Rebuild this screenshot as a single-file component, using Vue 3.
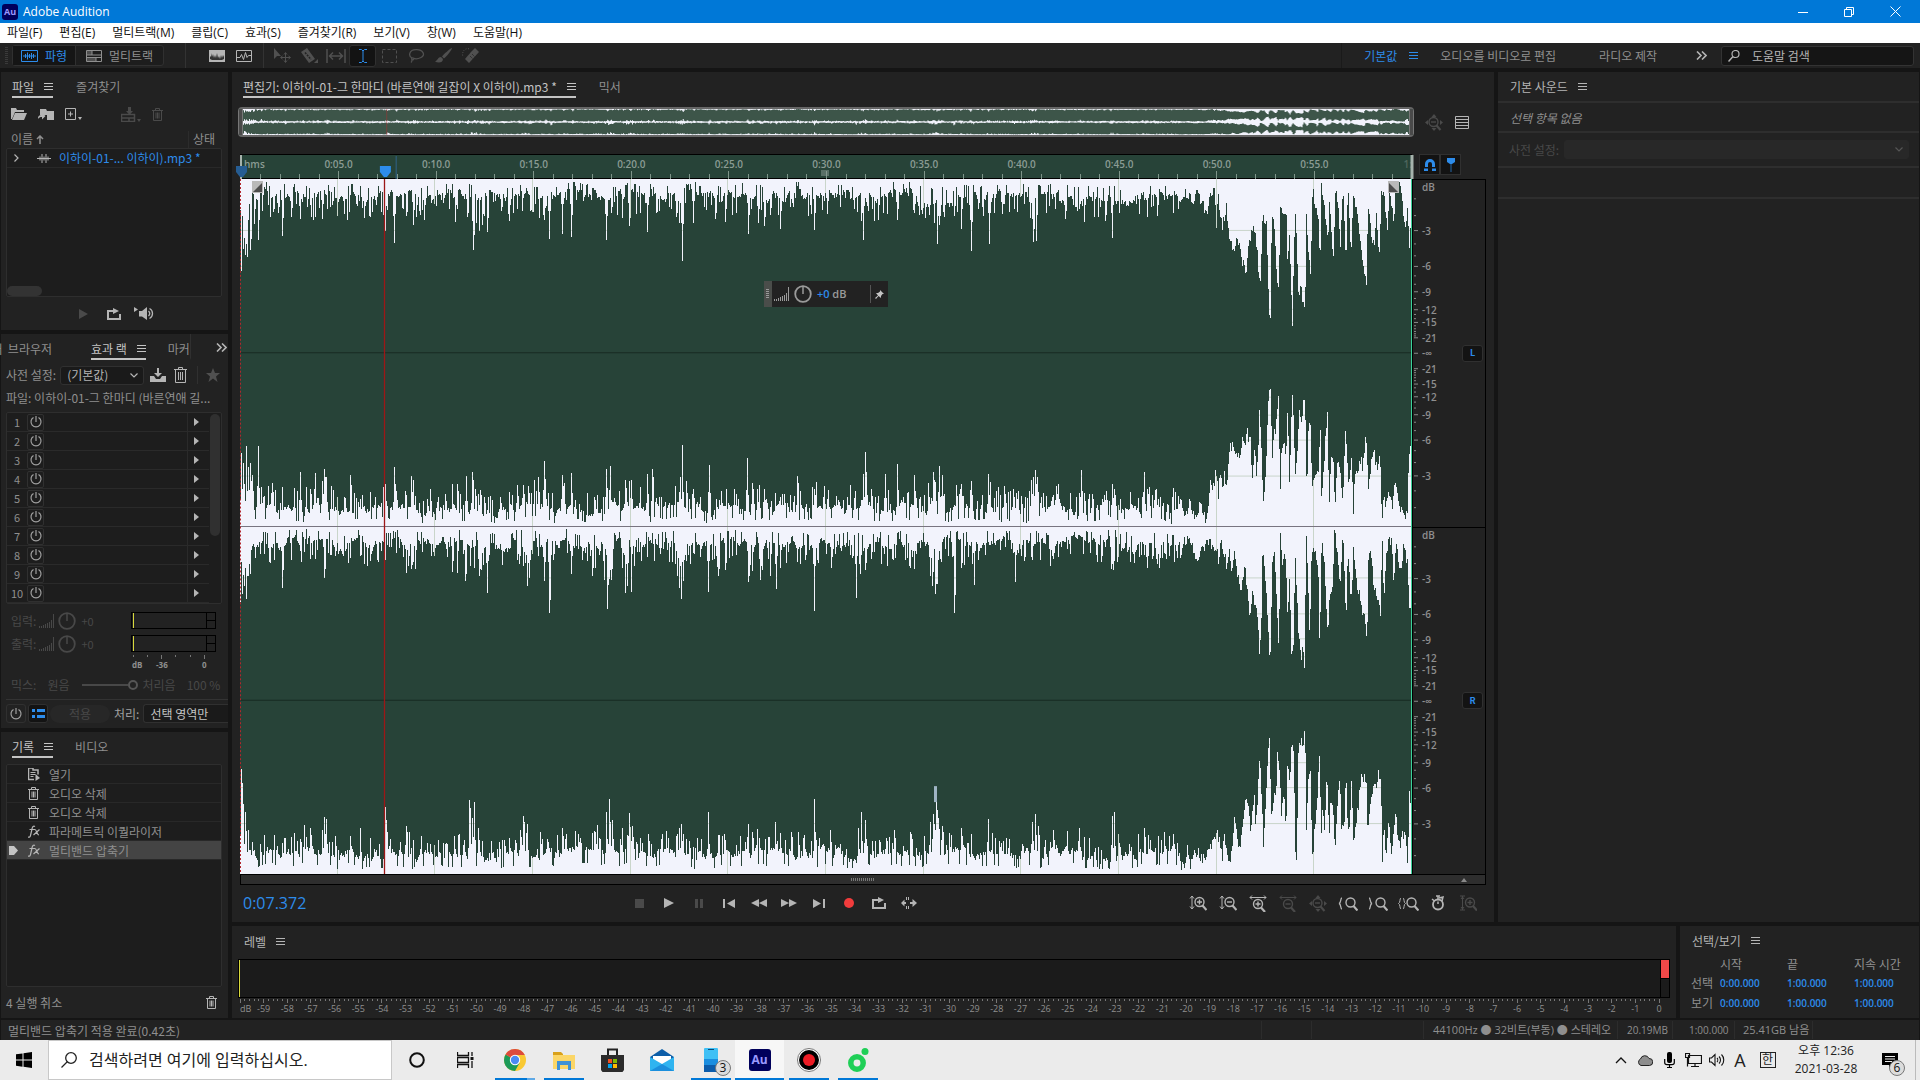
<template>
  <div class="app">
    <header class="titlebar">
      <span class="au-logo">Au</span>
      <span class="title-text">Adobe Audition</span>
      <div class="window-controls">
        <button type="button" aria-label="최소화"><Icon name="minimize" /></button>
        <button type="button" aria-label="이전 크기로"><Icon name="restore" /></button>
        <button type="button" aria-label="닫기"><Icon name="close" /></button>
      </div>
    </header>

    <nav class="menubar">
      <button v-for="item in menus" :key="item" type="button">{{ item }}</button>
    </nav>

    <div class="toolbar">
      <span class="grip"></span>
      <div class="mode-switch">
        <button type="button" class="mode active"><Icon name="waveform" />파형</button>
        <button type="button" class="mode"><Icon name="multitrack" />멀티트랙</button>
      </div>
      <div class="tool-group first">
        <button type="button" aria-label="스펙트럼"><Icon name="spectrum" /></button>
        <button type="button" aria-label="피치"><Icon name="pitch" /></button>
      </div>
      <div class="tool-group second">
        <button
          v-for="tool in tools"
          :key="tool"
          type="button"
          :aria-label="tool"
          :class="{ active: tool === 'ibeam' }"
        >
          <Icon :name="tool" />
        </button>
      </div>
      <div class="workspaces">
        <a href="#" class="ws active">기본값</a>
        <Icon name="menu" class="ws-menu" />
        <a href="#" class="ws wide">오디오를 비디오로 편집</a>
        <a href="#" class="ws radio">라디오 제작</a>
        <button type="button" class="more" aria-label="더 보기"><Icon name="more" /></button>
      </div>
      <label class="help-search">
        <Icon name="search" />
        <input type="text" placeholder="도움말 검색" aria-label="도움말 검색" />
      </label>
    </div>

    <main class="workspace">
      <aside class="left">
        <section class="panel files">
          <div class="tabs">
            <button type="button" class="tab active">파일<Icon name="menu" /></button>
            <button type="button" class="tab favorites">즐겨찾기</button>
          </div>
          <div class="file-tools">
            <button type="button" aria-label="열기"><Icon name="folder" /></button>
            <button type="button" aria-label="가져오기"><Icon name="importFile" /></button>
            <button type="button" aria-label="새로 만들기"><Icon name="newFile" /></button>
            <button type="button" class="insert" aria-label="삽입"><Icon name="insert" /></button>
            <button type="button" class="off" aria-label="삭제"><Icon name="trash" /></button>
          </div>
          <div class="file-head">
            <span>이름 <Icon name="arrowUp" /></span>
            <span class="state">상태</span>
          </div>
          <div class="box file-list">
            <div class="file-row">
              <Icon name="chevronRight" />
              <Icon name="wave" class="wave-icon" />
              <span>이하이-01-... 이하이).mp3 *</span>
            </div>
            <span class="h-thumb"></span>
          </div>
          <div class="preview">
            <button type="button" class="off" aria-label="재생"><Icon name="playSmall" /></button>
            <button type="button" aria-label="반복"><Icon name="loop" /></button>
            <button type="button" aria-label="자동 재생"><Icon name="speaker" /></button>
          </div>
        </section>

        <section class="panel effects">
          <div class="tabs">
            <button type="button" class="tab browser">ㅓ 브라우저</button>
            <button type="button" class="tab active">효과 랙<Icon name="menu" /></button>
            <button type="button" class="tab marker">마커</button>
            <button type="button" class="more" aria-label="더 보기"><Icon name="more" /></button>
          </div>
          <div class="preset">
            <label for="preset">사전 설정:</label>
            <span class="select-wrap">
              <select id="preset"><option>(기본값)</option></select>
              <Icon name="chevronDown" />
            </span>
            <button type="button" aria-label="저장"><Icon name="save" /></button>
            <button type="button" aria-label="삭제"><Icon name="trashBig" /></button>
            <button type="button" class="star" aria-label="즐겨찾기"><Icon name="star" /></button>
          </div>
          <p class="rack-file">파일: 이하이-01-그 한마디 (바른연애 길...</p>
          <div class="box rack">
            <ol>
              <li v-for="n in 10" :key="n">
                <span class="slot-no">{{ n }}</span>
                <button type="button" class="power" aria-label="전원"><Icon name="power" /></button>
                <button type="button" class="slot-more" aria-label="효과 선택"><Icon name="triangle" /></button>
              </li>
            </ol>
            <span class="v-thumb"></span>
          </div>
          <div class="io">
            <div v-for="label in ['입력:', '출력:']" :key="label" class="io-row">
              <span>{{ label }}</span>
              <Icon name="bars" />
              <Icon name="knob" />
              <span class="gain">+0</span>
              <span class="mini-meter"><i></i></span>
            </div>
            <svg class="mini-scale" width="85" height="18">
              <path d="M2.500 0v2M16.500 0v2M30.500 0v4M44.500 0v2M59.500 0v2M73.500 0v4" stroke="#777" />
              <text x="1" y="13">dB</text>
              <text x="25" y="13">-36</text>
              <text x="71" y="13">0</text>
            </svg>
            <label class="mix">
              <span>믹스:</span>
              <span class="dry">원음</span>
              <input type="range" min="0" max="100" value="100" disabled />
              <span class="wet">처리음</span>
              <span>100 %</span>
            </label>
          </div>
          <div class="rack-foot">
            <button type="button" class="square" aria-label="전원"><Icon name="power" /></button>
            <button type="button" class="square list-on" aria-label="목록"><Icon name="list" /></button>
            <button type="button" class="apply" disabled>적용</button>
            <label for="process">처리:</label>
            <select id="process"><option>선택 영역만</option></select>
          </div>
        </section>

        <section class="panel history">
          <div class="tabs">
            <button type="button" class="tab active">기록<Icon name="menu" /></button>
            <button type="button" class="tab video">비디오</button>
          </div>
          <ul class="box steps">
            <li v-for="(step, i) in steps" :key="i" :class="{ current: i === steps.length - 1 }">
              <span class="pointer"><Icon v-if="i === steps.length - 1" name="pointer" /></span>
              <span class="step-icon"><Icon :name="step.icon" /></span>
              <span class="step-text">{{ step.text }}</span>
            </li>
          </ul>
          <div class="history-foot">
            <span>4 실행 취소</span>
            <button type="button" aria-label="삭제"><Icon name="trash" /></button>
          </div>
        </section>
      </aside>

      <div class="main">
        <div class="main-top">
          <section class="panel editor">
            <div class="tabs">
              <button type="button" class="tab active">
                편집기: 이하이-01-그 한마디 (바른연애 길잡이 X 이하이).mp3 *<Icon name="menu" />
              </button>
              <button type="button" class="tab mixer">믹서</button>
            </div>

            <div class="overview-row">
              <div class="overview">
                <span class="handle"></span>
                <svg viewBox="0 0 1172 696" preserveAspectRatio="none">
                  <path :d="wavePath" fill="#f2f3fc" />
                  <path d="M0 348H1172M0 692H1172" stroke="#f2f3fc" stroke-width="16" />
                  <path d="M144.500 0V696" stroke="#b03030" />
                </svg>
                <span class="handle"></span>
              </div>
              <div class="overview-tools">
                <button type="button" class="off" aria-label="전체 축소"><Icon name="zoomFull" /></button>
                <button type="button" aria-label="목록 보기"><Icon name="rows" /></button>
              </div>
            </div>

            <div class="ruler-row">
              <svg class="ruler">
                <text x="3" y="13">hms</text>
                <g v-for="s in 59" :key="s">
                  <line
                    :x1="pct(s / 60)"
                    :x2="pct(s / 60)"
                    :y1="s % 5 ? 19 : 16"
                    y2="24"
                    stroke="#7f958a"
                    shape-rendering="crispEdges"
                  />
                  <text v-if="s % 5 === 0" :x="pct(s / 60)" y="13" text-anchor="middle">
                    {{ timeLabel(s) }}
                  </text>
                </g>
                <text x="100%" y="13" text-anchor="end" opacity="0.4">1:</text>
                <line x1="13.25%" x2="13.25%" y1="1" y2="24" stroke="#2f6289" />
                <svg x="50%" y="15" width="1" height="7" overflow="visible">
                  <path d="M-4.500 0v6M-2.500 0v6M-.5 0v6M1.500 0v6" stroke="#8b9c94" />
                </svg>
                <line x1="0" x2="0" y1="0" y2="24" stroke="#a6b3ac" stroke-width="2" />
                <svg x="0" y="11" width="1" height="1" overflow="visible">
                  <path d="M-5 0H6V6L2 11H-1L-5 6Z" fill="#265d93" />
                </svg>
                <svg :x="pct(playhead)" y="11" width="1" height="1" overflow="visible">
                  <path d="M-5 0H6V6L2 11H-1L-5 6Z" fill="#2d8ceb" />
                </svg>
                <line x1="100%" x2="100%" y1="0" y2="24" stroke="#a6b3ac" stroke-width="3" />
              </svg>
              <div class="snap">
                <button type="button" aria-label="스냅"><Icon name="magnet" /></button>
                <button type="button" aria-label="마커"><Icon name="markerPin" /></button>
              </div>
            </div>

            <div class="wave-row">
              <div class="wave-area">
                <svg class="wave" viewBox="0 0 1172 696" preserveAspectRatio="none">
                  <clipPath id="wave-shape"><path :d="wavePath" /></clipPath>
                  <path :d="wavePath" fill="#f2f3fc" shape-rendering="crispEdges" />
                  <path
                    :d="gridPath"
                    stroke="#4c7a35"
                    stroke-opacity="0.25"
                    fill="none"
                    clip-path="url(#wave-shape)"
                  />
                  <path d="M0 174H1172M0 522H1172" stroke="#172a22" />
                  <path d="M0 348H1172" stroke="#77737f" />
                  <path d="M695.500 608V624" stroke="#9fb4c4" stroke-width="3" />
                  <path d="M.5 0V696" stroke="#b3262c" stroke-dasharray="2 2" />
                  <path d="M1171.500 0V696" stroke="#3bd29a" />
                  <path d="M144.500 0V696" stroke="#9c1717" stroke-width="1.300" />
                </svg>
                <span class="fade fade-in"><Icon name="fadeIn" /></span>
                <span class="fade fade-out"><Icon name="fadeOut" /></span>
                <div class="hud">
                  <span class="hud-grip"></span>
                  <Icon name="bars" />
                  <Icon name="knob" />
                  <span class="hud-gain"><b>+0</b> dB</span>
                  <button type="button" aria-label="고정"><Icon name="pin" /></button>
                </div>
              </div>
              <div class="scales">
                <div v-for="ch in ['L', 'R']" :key="ch" class="scale">
                  <svg>
                    <text x="9" y="3.200%">dB</text>
                    <template v-for="t in dbTicks" :key="t.y">
                      <line x1="1" :x2="t.label ? 5 : 3" :y1="pct(t.y)" :y2="pct(t.y)" stroke="#8a8a8a" />
                      <text v-if="t.label" x="9" :y="pct(t.y)" dy="4">{{ t.label }}</text>
                    </template>
                  </svg>
                  <button type="button">{{ ch }}</button>
                </div>
              </div>
            </div>
            <div class="strip"><span class="strip-grip"></span><Icon name="tinyUp" /></div>

            <div class="transport">
              <span class="time">0:07.372</span>
              <div class="buttons">
                <button
                  v-for="name in transport"
                  :key="name"
                  type="button"
                  :aria-label="name"
                  :class="{ off: ['stop', 'pause'].includes(name), rec: name === 'record' }"
                >
                  <Icon :name="name" />
                </button>
              </div>
              <div class="buttons zooms">
                <button
                  v-for="name in zooms"
                  :key="name"
                  type="button"
                  :aria-label="name"
                  :class="{ off: ['zoomOutH', 'zoomFull', 'zoomTrack'].includes(name) }"
                >
                  <Icon :name="name" />
                </button>
              </div>
            </div>
          </section>

          <section class="panel sound">
            <h2>기본 사운드<Icon name="menu" /></h2>
            <p class="none">선택 항목 없음</p>
            <div class="sound-preset">
              <label for="sound-preset">사전 설정:</label>
              <span class="select-wrap">
                <select id="sound-preset" disabled></select>
                <Icon name="chevronDown" />
              </span>
            </div>
            <div class="blank"></div>
          </section>
        </div>

        <div class="main-bottom">
          <section class="panel levels">
            <h2>레벨<Icon name="menu" /></h2>
            <div class="meter"><i class="floor"></i><i class="clip"></i></div>
            <svg class="meter-scale">
              <line
                v-for="n in 301"
                :key="n"
                :x1="pct((n - 1) / 300)"
                :x2="pct((n - 1) / 300)"
                y1="1"
                :y2="(n - 1) % 5 ? 3 : 5"
                stroke="#777"
                shape-rendering="crispEdges"
              />
              <text x="0" y="14">dB</text>
              <text v-for="n in 60" :key="'t' + n" :x="pct(n / 60)" y="14" text-anchor="middle">
                {{ n - 60 }}
              </text>
            </svg>
          </section>

          <section class="panel selection">
            <h2>선택/보기<Icon name="menu" /></h2>
            <table>
              <thead>
                <tr><th></th><th>시작</th><th>끝</th><th>지속 시간</th></tr>
              </thead>
              <tbody>
                <tr v-for="row in ['선택', '보기']" :key="row">
                  <th>{{ row }}</th>
                  <td>0:00.000</td>
                  <td>1:00.000</td>
                  <td>1:00.000</td>
                </tr>
              </tbody>
            </table>
          </section>
        </div>
      </div>
    </main>

    <footer class="status">
      <span class="message">멀티밴드 압축기 적용 완료(0.42초)</span>
      <span class="cell empty"></span>
      <span class="cell gap"></span>
      <span class="cell format">44100Hz ● 32비트(부동) ● 스테레오</span>
      <span class="cell size">20.19MB</span>
      <span class="cell length">1:00.000</span>
      <span class="cell disk">25.41GB 남음</span>
      <span class="cell last"></span>
    </footer>

    <div class="taskbar">
      <button type="button" class="start" aria-label="시작"><Icon name="windows" /></button>
      <label class="win-search">
        <Icon name="winSearch" />
        <input type="text" placeholder="검색하려면 여기에 입력하십시오." aria-label="검색" />
      </label>
      <button
        v-for="app in apps"
        :key="app.icon"
        type="button"
        class="task"
        :class="[app.icon, { running: app.running }]"
        :aria-label="app.icon"
      >
        <span v-if="app.icon === 'audition'" class="au-logo large">Au</span>
        <Icon v-else :name="app.icon" />
        <span v-if="app.badge" class="badge">{{ app.badge }}</span>
      </button>
      <div class="tray">
        <button v-for="t in tray" :key="t" type="button" :aria-label="t"><Icon :name="t" /></button>
        <span class="ime">A</span>
        <span class="hangul"><b>한</b></span>
        <div class="clock"><span>오후 12:36</span><span>2021-03-28</span></div>
        <button type="button" class="notice" aria-label="알림">
          <Icon name="notice" />
          <span class="badge">6</span>
        </button>
      </div>
    </div>
  </div>
</template>

<script setup>
import { h } from 'vue'

const menus = ['파일(F)', '편집(E)', '멀티트랙(M)', '클립(C)', '효과(S)', '즐겨찾기(R)', '보기(V)', '창(W)', '도움말(H)']
const tools = ['move', 'razor', 'slip', 'ibeam', 'marquee', 'lasso', 'brush', 'heal']
const transport = ['stop', 'play', 'pause', 'prev', 'rewind', 'forward', 'next', 'record', 'loop', 'skip']
const zooms = ['zoomInV', 'zoomOutV', 'zoomInH', 'zoomOutH', 'zoomFull', 'zoomLeft', 'zoomRight', 'zoomSel', 'timer', 'zoomTrack']
const tray = ['caret', 'cloud', 'mic', 'network', 'volume']
const steps = [
  { icon: 'openStep', text: '열기' },
  { icon: 'trash', text: '오디오 삭제' },
  { icon: 'trash', text: '오디오 삭제' },
  { icon: 'fx', text: '파라메트릭 이퀄라이저' },
  { icon: 'fx', text: '멀티밴드 압축기' },
]
const apps = [
  { icon: 'cortana' },
  { icon: 'taskview' },
  { icon: 'chrome', running: true },
  { icon: 'explorer', running: true },
  { icon: 'store' },
  { icon: 'mail' },
  { icon: 'phone', running: true, badge: '3' },
  { icon: 'audition', running: true },
  { icon: 'recorder', running: true },
  { icon: 'melon', running: true },
]

const playhead = 7.372 / 60
const pct = (v) => (v * 100).toFixed(3) + '%'
const timeLabel = (s) => '0:' + String(s).padStart(2, '0') + '.0'

// dB ruler: one channel spans -inf in the middle to 0 dB at both edges
const labelled = [-3, -6, -9, -12, -15, -21]
const dbTicks = [{ y: 0.5, label: '-∞' }]
for (let db = -1; db >= -21; db--) {
  const amp = Math.pow(10, db / 20) / 2
  const label = labelled.includes(db) ? String(db) : ''
  dbTicks.push({ y: 0.5 - amp, label }, { y: 0.5 + amp, label })
}

const gridPath = (() => {
  let d = ''
  for (let s = 5; s < 60; s += 5) d += `M${Math.round((s / 60) * 1172) - 0.5} 0V696`
  for (const mid of [174, 522]) {
    for (const db of [-3, -6, -9, -12, -15]) {
      const a = Math.round(174 * Math.pow(10, db / 20))
      d += `M0 ${mid - a}.5H1172M0 ${mid + a}.5H1172`
    }
  }
  return d
})()

// Waveform outline: "x height" peaks for the quiet part, "x height" points for the loud tail (x in thirds)
const edges = [
  {
    y: 0,
    dir: 1,
    base: 13,
    peaks: '1 92 3 70 5 76 7 78 10 71 14 45 18 61 22 32 42 57 51 38 60 40 67 28 75 38 82 40 90 28 97 37 104 35 136 26 143 36 145 52 154 64 166 37 173 46 176 38 185 26 215 43 227 38 233 71 236 44 239 52 242 46 247 53 262 28 277 30 299 39 304 41 309 60 322 55 331 58 366 61 371 34 382 39 389 47 396 35 407 53 419 32 436 38 439 44 442 82 453 44 475 40 485 43 492 36 508 55 518 44 524 47 530 36 540 50 553 28 568 37 574 51 600 28 614 30 621 42 623 61 632 30 657 41 674 34 694 44 697 65 699 46 714 37 721 50 731 72 738 30 749 65 774 30 792 40 793 63 796 62 806 34 837 32 844 43 854 38 866 36 872 59 907 38 917 37 933 34 940 30 966 32 976 54',
    tail: '0 23 10 11 20 16 38 24 50 14 78 34 90 13 104 14 109 54 113 6 118 38 125 48 138 28 147 61 155 68 162 78 170 54 180 74 188 84 197 96 206 64 215 49 225 51 232 78 238 108 243 81 247 33 252 46 258 41 263 91 266 133 271 135 274 29 281 49 287 78 293 121 298 71 301 8 304 41 312 34 318 38 322 98 326 53 331 88 336 142 341 71 344 26 350 71 354 114 359 118 362 104 367 124 374 129 378 34 383 71 391 96 397 6 403 31 408 24 415 44 419 104 422 8 430 16 436 43 443 69 447 21 453 59 460 73 465 14 473 24 480 64 488 11 497 81 503 8 512 78 518 18 527 26 540 58 550 94 559 104 562 23 570 48 575 68 583 59 588 38 596 81 604 8 612 21 622 49 628 1 632 23 640 43 645 11 655 4 662 11 675 51 682 18 686 76 690 51 696 30',
  },
  {
    y: 348,
    dir: -1,
    base: 15,
    peaks: '1 74 3 64 6 81 8 60 10 64 12 52 18 81 21 40 28 41 31 34 42 40 54 39 57 36 60 55 66 40 70 38 75 54 82 46 84 58 86 50 97 30 110 52 120 28 135 30 145 43 154 60 156 36 166 32 171 51 173 47 190 38 198 30 212 43 217 43 226 51 232 55 235 38 240 37 248 30 260 30 277 42 284 33 288 41 298 50 304 66 312 34 322 52 324 44 331 54 347 34 354 30 366 58 370 61 379 36 385 47 389 46 391 47 400 40 407 53 412 58 419 30 440 50 442 82 446 46 453 38 460 30 469 62 476 28 486 38 507 69 512 44 519 42 526 28 535 34 540 30 557 51 560 36 574 38 587 28 596 31 607 30 615 36 623 53 625 75 631 38 645 53 657 63 667 34 674 52 688 44 693 55 695 45 699 61 702 52 716 42 721 43 731 46 742 32 748 53 750 45 765 33 774 30 785 30 791 47 793 50 795 57 797 50 803 34 814 22 839 34 841 57 844 34 849 33 862 28 872 43 874 38 880 28 902 30 904 55 907 38 915 37 920 30 933 39 941 30 956 26 970 42 973 39 975 59 977 52',
    tail: '0 29 10 16 20 14 27 26 36 11 48 11 60 23 75 8 83 16 90 43 98 36 107 59 114 31 121 61 127 39 132 53 137 33 146 76 155 83 165 74 175 69 187 89 193 76 200 101 204 86 208 96 216 51 222 83 229 43 238 123 243 76 248 22 253 36 257 56 264 128 270 140 275 68 280 89 287 99 294 126 300 39 304 86 312 79 317 68 322 129 327 49 331 86 335 141 340 111 344 46 350 66 356 121 362 103 368 124 374 128 379 36 385 104 391 104 395 33 403 53 411 56 415 53 419 111 423 33 430 59 436 91 441 116 446 13 452 76 458 69 464 24 470 63 478 64 487 26 496 103 503 51 508 44 514 79 518 11 525 59 530 49 541 69 547 59 557 94 563 39 572 64 582 74 590 56 599 73 604 6 611 33 616 16 622 36 630 34 637 16 644 46 650 36 657 18 664 19 670 9 681 16 686 76 690 86 693 26 696 20',
  },
  {
    y: 348,
    dir: 1,
    base: 14,
    peaks: '0 76 2 68 4 60 6 73 8 50 10 48 15 32 20 28 24 28 42 62 60 25 64 26 84 52 88 27 102 28 110 32 120 30 130 35 138 36 166 47 168 40 171 43 175 43 182 26 212 46 217 47 225 55 230 40 234 42 239 50 241 44 247 67 260 18 277 34 279 38 283 40 287 60 289 52 298 30 304 55 309 87 313 34 331 48 343 25 352 50 364 54 367 83 369 53 371 54 382 42 385 67 387 60 391 66 394 40 399 26 420 28 435 38 437 50 439 62 441 73 443 55 446 35 454 28 468 66 472 34 478 50 485 44 489 32 508 56 512 45 520 54 522 44 530 50 536 63 540 42 548 26 557 36 560 38 574 85 591 42 612 32 616 72 620 48 625 44 632 26 653 34 667 32 674 43 690 50 692 60 695 68 697 58 701 36 708 30 714 87 721 42 732 38 734 59 738 34 760 24 775 56 777 24 800 34 813 33 843 28 857 36 871 43 873 44 877 36 895 26 907 42 913 30 917 38 919 42 929 30 958 34 978 37',
    tail: '0 28 12 13 30 18 55 35 70 20 90 18 108 20 116 36 122 16 140 40 147 20 155 45 163 23 172 50 184 65 193 41 200 63 208 95 213 83 217 60 224 83 231 90 238 130 243 93 247 13 252 40 260 80 267 133 272 113 275 30 282 31 290 80 295 128 300 11 306 33 312 23 318 46 322 106 326 50 330 80 334 138 340 113 344 25 350 76 355 110 362 130 367 126 373 140 377 6 382 40 388 116 394 20 402 26 410 30 414 56 418 125 424 10 432 40 443 113 448 63 455 73 462 5 470 20 479 66 488 5 497 93 503 21 512 80 519 25 530 56 543 80 552 90 560 121 563 36 571 30 580 56 592 70 600 88 605 6 611 75 618 33 625 13 634 18 640 56 647 23 655 33 662 46 670 13 676 33 682 33 686 76 692 80 696 70',
  },
  {
    y: 696,
    dir: -1,
    base: 17,
    peaks: '1 105 3 70 5 62 8 44 12 32 20 30 42 31 60 35 66 37 70 46 82 44 84 57 86 55 95 38 110 38 120 46 130 36 145 67 147 42 160 32 166 48 169 42 190 30 205 30 214 38 229 74 232 56 234 72 238 46 262 34 280 44 283 58 287 50 300 42 322 46 340 36 355 42 359 36 366 62 369 75 372 54 382 46 389 61 392 48 408 40 439 46 441 50 443 40 457 36 468 62 484 40 508 50 512 42 519 36 535 52 545 34 558 42 574 75 576 34 590 44 600 30 618 46 621 62 625 54 640 32 654 44 671 40 690 52 693 60 696 80 698 56 702 48 721 46 731 40 748 55 766 36 792 52 795 60 798 48 814 34 839 46 849 36 872 58 874 62 878 40 904 46 910 34 933 40 952 32 975 38',
    tail: '0 9 15 6 20 32 30 11 45 24 60 17 75 17 85 26 95 32 110 42 117 34 127 11 130 47 140 14 152 16 163 57 170 34 180 31 187 51 196 81 204 67 212 39 221 84 226 41 233 87 238 117 243 81 249 27 254 59 260 101 267 141 274 47 280 79 286 74 292 126 298 94 303 61 310 77 317 51 322 117 328 84 334 136 340 124 344 31 349 17 354 121 362 134 368 126 374 143 378 44 384 101 390 101 396 16 403 44 409 71 418 121 422 32 427 67 433 37 439 106 446 34 451 76 458 67 464 17 470 57 478 104 482 46 492 54 497 102 503 39 508 51 514 96 518 26 530 57 543 97 550 94 557 99 562 36 568 61 575 84 582 87 590 94 596 102 602 84 606 14 611 54 616 12 625 51 632 17 640 41 646 59 655 27 665 37 675 41 682 11 688 94 693 24 696 20',
  },
]

const toPairs = (text) => {
  const n = text.split(' ').map(Number)
  const out = []
  for (let i = 0; i < n.length; i += 2) out.push([n[i], n[i + 1]])
  return out
}

const edgePath = (edge, index) => {
  let seed = 77 + index * 991
  const rand = () => {
    seed = (seed * 16807) % 2147483647
    return seed / 2147483647
  }
  const heights = []
  let drift = 0
  for (let x = 0; x < 1172; x++) {
    drift = drift * 0.85 + (rand() - 0.5) * 7
    const r = rand()
    let v = edge.base + drift + r * 6
    if (r > 0.75) v += rand() * 18
    if (r < 0.15) v *= 0.45
    heights.push(Math.max(3, v))
  }
  for (const [x, height] of toPairs(edge.peaks)) {
    heights[x] = height
    if (height > 36) {
      heights[x + 1] = Math.max(heights[x + 1], height * (0.4 + rand() * 0.5))
      if (x > 0) heights[x - 1] = Math.max(heights[x - 1], height * (0.3 + rand() * 0.3))
    }
  }
  const tail = toPairs(edge.tail)
  let k = 0
  for (let x = 940; x < 1172; x++) {
    const t = (x - 940) * 3
    while (k < tail.length - 2 && tail[k + 1][0] < t) k++
    const [x0, h0] = tail[k]
    const [x1, h1] = tail[k + 1]
    const v = h0 + ((h1 - h0) * (t - x0)) / (x1 - x0)
    heights[x] = Math.max(2, v + (rand() - 0.5) * 12)
  }
  let d = `M0 ${edge.y}`
  heights.forEach((v, x) => {
    d += `V${edge.y + edge.dir * Math.round(v)}H${x + 1}`
  })
  return d + `V${edge.y}Z`
}
const wavePath = edges.map(edgePath).join('')

const lens = (x, y, sign) =>
  `<g fill="none" stroke="currentColor" stroke-width="1.4"><circle cx="${x}" cy="${y}" r="4.500"/><path d="M${x + 3} ${y + 3.5}l4 4.500" stroke-width="2.200"/>${sign ? `<path d="M${x - 2.5} ${y}h5${sign === '+' ? `M${x} ${y - 2.5}v5` : ''}"/>` : ''}</g>`
const vArrow = '<path d="M3 1v13M1 3.500L3 1l2 2.500M1 11.500L3 14l2-2.500" fill="none" stroke="currentColor"/>'
const hArrow = '<path d="M1 2.500h16M3 .5l-2 2 2 2M15 .5l2 2-2 2" fill="none" stroke="currentColor"/>'

const icons = {
  minimize: [10, 10, '<path d="M0 5.500h10" stroke="#fff"/>'],
  restore: [10, 10, '<path d="M.5 2.500h7v7h-7zM2.500 2.500v-2h7v7h-2" fill="none" stroke="#fff"/>'],
  close: [11, 11, '<path d="M.5.5l10 10M10.500.5l-10 10" stroke="#fff" fill="none"/>'],
  menu: [9, 8, '<path d="M0 .5h9M0 3.500h9M0 6.500h9" stroke="currentColor"/>'],
  waveform: [17, 12, '<path d="M.5.5h16v11H.5z" fill="none" stroke="currentColor"/><path d="M2 6h13M4.500 4v4M6.500 2.500v7M8.500 4v4M10.500 3v6M12.500 4v4" stroke="currentColor"/>'],
  multitrack: [16, 12, '<path d="M.5.5h15v11H.5zM.5 5h15M.5 7.500h15M6 1v4M10 7.500v4" fill="none" stroke="currentColor"/><path d="M1 1h5v4H1zM1 8h9v3H1z" fill="currentColor" opacity=".45"/>'],
  spectrum: [16, 12, '<path d="M0 0h16v12H0z" fill="currentColor"/><path d="M1 6l1 1V3l1 4 1-3 1 4 1-3 1 3 1-5 1 5 1-2 1 3 1-4 1 3 1-3 1 2v2l-2 1H3L1 9z" fill="#333"/>'],
  pitch: [16, 12, '<path d="M.5.5h15v11H.5z" fill="none" stroke="currentColor"/><path d="M1 7.500h3l1.500-3 2 5 2-7 1.500 5 1.500-2H15" fill="none" stroke="currentColor"/>'],
  move: [18, 15, '<path d="M1 0v11l3-3h4z" fill="currentColor"/><path d="M12.500 5v9M8 9.500h9M11 6.500l1.500-2 1.500 2M11 12.500l1.500 2 1.500-2M9.500 8l-2 1.500 2 1.500M15.500 8l2 1.500-2 1.500" fill="none" stroke="currentColor"/>'],
  razor: [18, 16, '<path d="M1 4l6-4 8 11-6 4z" fill="currentColor"/><path d="M5 4.500l6 7" stroke="#222" stroke-width="1.500" stroke-dasharray="2 1"/><path d="M14 15h4v-4z" fill="currentColor"/>'],
  slip: [20, 14, '<path d="M1 0v14M19 0v14M4 7h12M7 3.500L3.500 7 7 10.500M13 3.500L16.500 7 13 10.500" fill="none" stroke="currentColor" stroke-width="1.500"/>'],
  ibeam: [8, 14, '<path d="M0 .5h2.500L4 2 5.500.5H8M4 2v10M0 13.500h2.500L4 12l1.500 1.500H8" fill="none" stroke="currentColor"/>'],
  marquee: [15, 14, '<path d="M.5.5h14v13H.5z" fill="none" stroke="currentColor" stroke-dasharray="3 2"/>'],
  lasso: [17, 14, '<path d="M4 9C0 7 1 1 8 .7s10 5.300 5 7.800-7 1-8 .5-2 .5-1 1.500 2-.5 1.500-1.500M4 11c0 1-.5 2-1 2.500" fill="none" stroke="currentColor" stroke-width="1.300"/>'],
  brush: [17, 15, '<path d="M16.500 0C14 1.500 9 6 7 8.500L9 10.500C12 8 16 3 17 .5zM6 9c-3 0-3 3-6 4.500 3 1.500 8 1.500 8-2.500z" fill="currentColor"/>'],
  heal: [17, 15, '<path d="M9 4l4-4 4 4-10 11-4-4z" fill="currentColor"/><path d="M7 .8C3 0 0 3 .7 8" fill="none" stroke="currentColor" stroke-dasharray="1 1.500"/><path d="M8 8l3 3M10 6l3 3" stroke="#222" stroke-dasharray="1 1"/>'],
  more: [11, 9, '<path d="M1 .5l4 4-4 4M6 .5l4 4-4 4" fill="none" stroke="currentColor" stroke-width="1.600"/>'],
  search: [12, 12, '<circle cx="7.500" cy="4" r="3.500" fill="none" stroke="currentColor" stroke-width="1.200"/><path d="M5 6.500L.5 11.500" stroke="currentColor" stroke-width="1.500"/>'],
  folder: [16, 12, '<path d="M0 0h5l1 2h7v2H4L1 11H0z" fill="currentColor"/><path d="M4 5h12l-3 7H1z" fill="currentColor"/>'],
  importFile: [16, 13, '<path d="M2 1h6l1 2h7v9H9V7H2z" fill="currentColor"/><path d="M0 11c0-3 1-4 4-4V4.500L7.500 8 4 11.500V9C2 9 1 9.500 0 11z" fill="currentColor"/>'],
  newFile: [17, 12, '<path d="M.5.5h10v11H.5z" fill="none" stroke="currentColor"/><path d="M3 6h5M5.500 3.500v5" stroke="currentColor"/><path d="M13 9h4l-2 3z" fill="currentColor"/>'],
  insert: [20, 15, '<path d="M.5 7.500h13v7H.5zM.5 11h13M8 11v3" fill="none" stroke="currentColor" stroke-width="1.500"/><path d="M7 0h3v4h2L8.500 8 5 4h2z" fill="currentColor"/><path d="M16 12h4l-2 3z" fill="currentColor"/>'],
  trash: [11, 13, '<path d="M0 2.500h11M3.500 2.500v-2h4v2M1.500 2.500v10h8v-10M4 4.500v6M5.500 4.500v6M7 4.500v6" fill="none" stroke="currentColor"/>'],
  trashBig: [13, 16, '<path d="M0 2.500h13M4.500 2.500v-2h4v2M1.500 2.500v13h10v-13M4.500 5v8M6.500 5v8M8.500 5v8" fill="none" stroke="currentColor"/>'],
  arrowUp: [8, 9, '<path d="M4 9V1M1 4l3-3 3 3" fill="none" stroke="currentColor" stroke-width="1.500"/>'],
  chevronRight: [5, 8, '<path d="M.5.5l3.500 3.500L.5 7.500" fill="none" stroke="currentColor" stroke-width="1.200"/>'],
  chevronDown: [8, 5, '<path d="M.5.5L4 4 7.500.5" fill="none" stroke="currentColor" stroke-width="1.200"/>'],
  wave: [14, 9, '<path d="M0 4.500h14M3 2.500v4M5 0v9M7 2.500v4M9 0v9M11 2.500v4" stroke="currentColor"/>'],
  playSmall: [9, 10, '<path d="M0 0l9 5-9 5z" fill="currentColor"/>'],
  loop: [14, 12, '<path d="M4 3H1v8h12V6" fill="none" stroke="currentColor" stroke-width="2"/><path d="M3 3h5" stroke="currentColor" stroke-width="2"/><path d="M6 0l6 3-6 3z" fill="currentColor"/>'],
  speaker: [20, 13, '<path d="M0 0l4 2.500L0 5zM5 4h3l5-4v13L8 9.500H5z" fill="currentColor"/><path d="M14.500 4c1.500 1.500 1.500 3.500 0 5M15.500 1.500c4 2 4 8 0 10" fill="none" stroke="currentColor" stroke-width="1.300"/>'],
  save: [16, 14, '<path d="M0 8h4l2 3h4l2-3h4v6H0z" fill="currentColor"/><path d="M7 0h2v5h3L8 9 4 5h3z" fill="currentColor"/>'],
  star: [14, 14, '<path d="M7 0l2 5h5l-4 3.500L11.500 14 7 10.500 2.500 14 4 8.500 0 5h5z" fill="currentColor"/>'],
  power: [12, 12, '<path d="M3.500 1.500a5 5 0 1 0 5 0M6 0v6" fill="none" stroke="currentColor" stroke-width="1.200"/>'],
  triangle: [5, 8, '<path d="M0 0l5 4-5 4z" fill="currentColor"/>'],
  bars: [16, 14, '<path d="M.5 14v-2M2.500 14v-2M4.500 14v-3M6.500 14v-4M8.500 14v-5M10.500 14V8M12.500 14V6M14.500 14V0" stroke="currentColor"/>'],
  knob: [18, 18, '<circle cx="9" cy="9" r="7.800" fill="none" stroke="currentColor" stroke-width="1.800"/><path d="M9 2v7" stroke="currentColor" stroke-width="1.500"/>'],
  list: [13, 9, '<path d="M0 0h3v3H0zM5 0h8v3H5zM0 6h3v3H0zM5 6h8v3H5z" fill="currentColor"/>'],
  openStep: [12, 13, '<path d="M0 0h5v2h5v4.500M.5 0v11.500H6" fill="none" stroke="currentColor" stroke-width="1.500"/><path d="M2.500 4.500h5M2.500 6.500h5M2.500 8.500h3" stroke="currentColor"/><path d="M7.500 6l4.500 4-4.500 3z" fill="currentColor"/>'],
  fx: [12, 13, '<path d="M7 1.500C5.500.5 4.500 1.500 4 4L2.500 10.500c-.3 1.300-1 2-2.500 1.500M1.500 4.500H7M5.500 10L11.500 4.500M7 4.500c1.500 0 2 5.500 4 5.500" fill="none" stroke="currentColor" stroke-width="1.200"/>'],
  pointer: [9, 9, '<path d="M0 0h5l4 4.500-4 4.500H0z" fill="currentColor"/>'],
  rows: [14, 13, '<path d="M.5.5h13v12H.5zM.5 3.500h13M.5 6.500h13M.5 9.500h13" fill="none" stroke="currentColor"/>'],
  magnet: [14, 13, '<path d="M3.500 9V6a3.500 3.500 0 0 1 7 0v3" fill="none" stroke="currentColor" stroke-width="3"/><path d="M1 10.500h4V13H1zM9 10.500h4V13H9z" fill="currentColor"/>'],
  markerPin: [8, 14, '<path d="M0 0h8v4L5 6H3L0 4z" fill="currentColor"/><path d="M4 5v9" stroke="currentColor" opacity=".7"/>'],
  fadeIn: [11, 12, '<path d="M0 0h11v12H0z" fill="#b9b9b9"/><path d="M10 2v9H1z" fill="#4c4c4c"/>'],
  fadeOut: [11, 12, '<path d="M0 0h11v12H0z" fill="#b9b9b9"/><path d="M1 2v9h9z" fill="#4c4c4c"/>'],
  pin: [9, 9, '<path d="M5 0l4 4H7.500L6 6v2L3.500 6 1 9 0 8l3-2.500L1 3h2l2-1.500z" fill="currentColor"/>'],
  tinyUp: [6, 4, '<path d="M0 4l3-4 3 4z" fill="#8a8a8a"/>'],
  stop: [9, 9, '<path d="M0 0h9v9H0z" fill="currentColor"/>'],
  play: [10, 10, '<path d="M0 0l10 5-10 5z" fill="currentColor"/>'],
  pause: [8, 9, '<path d="M0 0h3v9H0zM5 0h3v9H5z" fill="currentColor"/>'],
  prev: [12, 9, '<path d="M0 0h2v9H0zM12 0v9L4 4.500z" fill="currentColor"/>'],
  rewind: [16, 8, '<path d="M8 0v8L0 4zM16 0v8L8 4z" fill="currentColor"/>'],
  forward: [16, 8, '<path d="M0 0v8l8-4zM8 0v8l8-4z" fill="currentColor"/>'],
  next: [12, 9, '<path d="M10 0h2v9h-2zM0 0v9l8-4.500z" fill="currentColor"/>'],
  record: [10, 10, '<circle cx="5" cy="5" r="5" fill="currentColor"/>'],
  skip: [16, 12, '<path d="M3.500 2.500L0 6l3.500 3.500V7H5V5H3.500zM11.500 2L16 6l-4.500 4V7H9V5h2.500z" fill="currentColor"/><path d="M5.500 0v3M5.500 9v3M7.500 0v3M7.500 9v3" stroke="currentColor"/>'],
  zoomInV: [18, 16, vArrow + lens(10.5, 7, '+')],
  zoomOutV: [18, 16, vArrow + lens(10.5, 7, '-')],
  zoomInH: [18, 17, hArrow + lens(9, 9, '+')],
  zoomOutH: [18, 17, hArrow + lens(9, 9, '-')],
  zoomFull: [18, 17, '<path d="M6.500 3L9 0l2.500 3zM3 6L0 8.500 3 11zM15 6l3 2.500L15 11zM6.500 14L9 17l2.500-3z" fill="currentColor"/>' + lens(8.5, 8, '-')],
  zoomLeft: [20, 15, '<path d="M4 2C2 2 3.500 7 1 7.500 3.500 8 2 13 4 13" fill="none" stroke="currentColor" stroke-width="1.300"/>' + lens(12.5, 6.5, '')],
  zoomRight: [20, 15, '<path d="M1 2c2 0 .5 5 3 5.500C1.500 8 3 13 1 13" fill="none" stroke="currentColor" stroke-width="1.300"/>' + lens(12.5, 6.5, '')],
  zoomSel: [21, 15, '<path d="M3 2C1.500 2 2.500 7 .5 7.500 2.500 8 1.500 13 3 13M5 2c1.500 0 .5 5 2.500 5.500C5.500 8 6.500 13 5 13" fill="none" stroke="currentColor"/>' + lens(13.5, 6.5, '')],
  timer: [14, 16, '<circle cx="7" cy="9.500" r="5" fill="none" stroke="currentColor" stroke-width="1.800"/><path d="M5 1h4M7 1v4M1 4l2.500 2M7 9V6.500M8 3l4-1-1 4" stroke="currentColor" stroke-width="1.500" fill="none"/>'],
  zoomTrack: [18, 16, '<path d="M1 1h5M1 15h5M3.500 1v14M2 4l1.500-2L5 4M2 12l1.500 2L5 12" fill="none" stroke="currentColor"/>' + lens(11, 7.5, '+')],
  windows: [16, 16, '<path d="M0 2.300L6.500 1.400V7.600H0zM7.500 1.200L16 0v7.600H7.500zM0 8.500h6.500v6.200L0 13.800zM7.500 8.500H16V16l-8.500-1.200z" fill="#000"/>'],
  winSearch: [16, 16, '<circle cx="10" cy="6" r="5.300" fill="none" stroke="#222" stroke-width="1.300"/><path d="M6.500 9.500l-6 6" stroke="#222" stroke-width="1.300"/>'],
  cortana: [16, 16, '<circle cx="8" cy="8" r="6.800" fill="none" stroke="#111" stroke-width="2"/>'],
  taskview: [17, 16, '<path d="M.5 0v3.500h11V0M.5 16v-3.500h11V16M.5 5.500h11v5H.5zM15 0v4M15 9v7" fill="none" stroke="#111" stroke-width="1.300"/><path d="M13.500 5h3v3h-3z" fill="#111"/>'],
  chrome: [22, 22, '<circle cx="11" cy="11" r="11" fill="#f9c933"/><path d="M11 11L1.500 5.500A11 11 0 0 0 11 22l4.500-8z" fill="#1b9a58"/><path d="M11 11L1.500 5.500A11 11 0 0 1 20.800 6H11z" fill="#dc4b3e"/><circle cx="11" cy="11" r="5.200" fill="#fff"/><circle cx="11" cy="11" r="4.200" fill="#4a8af4"/>'],
  explorer: [22, 19, '<path d="M0 1h8l2 2v3H0z" fill="#d9a11a"/><path d="M0 4h22v14H0z" fill="#fbd667"/><path d="M4 10h14v9h-3v-5H7v5H4z" fill="#3f92d6"/>'],
  store: [23, 24, '<path d="M7 8V1.500h9V8" fill="none" stroke="#222" stroke-width="2"/><path d="M0 7h23v15l-1.500 2h-20L0 22z" fill="#2b2b2b"/><path d="M7 11h4v4H7z" fill="#f25022"/><path d="M12 11h4v4h-4z" fill="#7fba00"/><path d="M7 16h4v4H7z" fill="#00a4ef"/><path d="M12 16h4v4h-4z" fill="#ffb900"/>'],
  mail: [24, 22, '<path d="M0 8l12-8 12 8v14H0z" fill="#0d5ea8"/><path d="M3 7h18v9H3z" fill="#fff"/><path d="M0 8l12 7L24 8v14H0z" fill="#2fb4f0"/><path d="M0 22l12-7 12 7z" fill="#1b8fdd"/>'],
  phone: [14, 24, '<rect width="14" height="24" rx="1" fill="#3fc0f5"/><path d="M0 11h14v7H0z" fill="#1a8ee0"/><path d="M0 17h14v7H0z" fill="#0b5cab"/><path d="M4 1.500h6" stroke="#0a4a7a"/>'],
  recorder: [24, 24, '<circle cx="12" cy="12" r="11.500" fill="#fff" stroke="#777"/><circle cx="12" cy="12" r="10" fill="#000"/><circle cx="12" cy="12" r="6" fill="#ee1c25"/>'],
  melon: [22, 24, '<circle cx="10" cy="15" r="6.200" fill="none" stroke="#1fcf57" stroke-width="5.500"/><circle cx="18" cy="3.500" r="3.500" fill="#1fcf57"/>'],
  caret: [12, 8, '<path d="M1 7l5-5 5 5" fill="none" stroke="#111" stroke-width="1.300"/>'],
  cloud: [16, 12, '<path d="M4 11.500a3.500 3.500 0 0 1-.5-6.500 4.500 4.500 0 0 1 8.500-.5 3.500 3.500 0 0 1 .5 7z" fill="#8e8e8e" stroke="#222"/>'],
  mic: [11, 16, '<rect x="3" width="5" height="11" rx="2" fill="#000"/><path d="M.7 7v3.500c0 1.500 1 2.200 2.300 2.200h5c1.300 0 2.300-.7 2.300-2.200V7M5.500 13v3M3 15.500h5" fill="none" stroke="#000" stroke-width="1.200"/>'],
  network: [17, 14, '<path d="M3.500 2.500h13v8h-13zM10 10.500v3M6 13.500h8M.5.5h4v4h-4zM2.500 4.500v9" fill="none" stroke="#111" stroke-width="1.200"/>'],
  volume: [16, 14, '<path d="M.5 5h2L6 1.500v11L2.500 9h-2zM8 5c1 1 1 3 0 4M10 3.500c2 2 2 5 0 7M12.500 1.500c3 3 3 8 0 11" fill="none" stroke="#111" stroke-width="1.100"/>'],
  notice: [16, 15, '<path d="M0 0h16v12h-5l-4 3v-3H0z" fill="#000"/><path d="M3 3.500h10M3 6h10M3 8.500h7" stroke="#ececec"/>'],
}

const Icon = (props) => {
  const [w, ht, body] = icons[props.name]
  return h('svg', { width: w, height: ht, viewBox: `0 0 ${w} ${ht}`, innerHTML: body, 'aria-hidden': 'true' })
}
Icon.props = ['name']
</script>

<style>
body {
  margin: 0;
  background: #151515;
}
</style>

<style scoped>
.app {
  display: flex;
  flex-direction: column;
  height: 100vh;
  background: #151515;
  color: #8f8f8f;
  font-family: 'Open Sans', 'Noto Sans CJK KR', sans-serif;
  font-size: 12px;
  line-height: 16px;
  white-space: nowrap;
  overflow: hidden;
}

.app *,
.app svg {
  box-sizing: border-box;
}

svg {
  flex: none;
}

button,
input,
select {
  margin: 0;
  padding: 0;
  border: 0;
  background: none;
  color: inherit;
  font: inherit;
}

button {
  display: flex;
  align-items: center;
  justify-content: center;
}

select {
  appearance: none;
  opacity: 1;
}

a {
  color: inherit;
  text-decoration: none;
}

h2,
p,
ol,
ul {
  margin: 0;
  padding: 0;
  font-size: 12px;
  font-weight: 400;
  list-style: none;
}

.off {
  color: #4a4a4a;
}

.titlebar {
  display: flex;
  align-items: center;
  flex: none;
  height: 23px;
  padding-left: 2px;
  background: #0078d7;
  color: #fff;
}

.au-logo {
  display: flex;
  align-items: center;
  justify-content: center;
  width: 16px;
  height: 16px;
  border-radius: 3px;
  background: #00005b;
  color: #9999ff;
  font-size: 9px;
  font-weight: 700;
}

.au-logo.large {
  width: 22px;
  height: 22px;
  font-size: 12px;
}

.title-text {
  margin-left: 5px;
}

.window-controls {
  display: flex;
  margin: 0 2px 0 auto;
}

.window-controls button {
  width: 46px;
  height: 20px;
}

.menubar {
  display: flex;
  flex: none;
  gap: 17px;
  height: 20px;
  padding-left: 7px;
  background: #fff;
  color: #111;
}

.toolbar {
  display: flex;
  align-items: center;
  flex: none;
  height: 25px;
  margin-bottom: 4px;
  background: #222;
}

.toolbar,
.workspace,
.message {
  font-family: 'Noto Sans CJK KR', 'Open Sans', sans-serif;
}

.grip {
  width: 3px;
  height: 18px;
  margin: 0 4px 0 5px;
  background: repeating-linear-gradient(#3a3a3a 0 1px, #222 1px 2px);
}

.mode-switch {
  display: flex;
  height: 21px;
  border: 1px solid #303030;
  border-radius: 3px;
  background: #1d1d1d;
}

.mode {
  gap: 7px;
  width: 87px;
}

.mode.active {
  width: 63px;
  border-right: 1px solid #303030;
  background: #151515;
  color: #2d8ceb;
}

.tool-group {
  display: flex;
  align-items: center;
  height: 25px;
  color: #b5b5b5;
}

.tool-group.first {
  margin-left: 21px;
  padding: 0 6px 0 17px;
  border-left: 1px solid #333;
}

.tool-group.second {
  padding-left: 4px;
  border-left: 1px solid #333;
  color: #505050;
}

.tool-group button {
  width: 27px;
  height: 22px;
}

.tool-group .active {
  border: 1px solid #303030;
  border-radius: 3px;
  background: #131313;
  color: #2d8ceb;
}

.workspaces {
  display: flex;
  align-items: center;
  height: 25px;
  margin-left: auto;
  padding: 0 10px 0 22px;
  border-left: 1px solid #1a1a1a;
}

.ws.active,
.ws-menu {
  color: #2d8ceb;
}

.ws-menu {
  margin-left: 12px;
}

.ws.wide {
  margin-left: 22px;
}

.ws.radio {
  margin-left: 43px;
}

.more {
  margin-left: 39px;
  color: #b5b5b5;
}

.help-search {
  display: flex;
  align-items: center;
  gap: 12px;
  width: 193px;
  height: 20px;
  margin: 0 6px 0 4px;
  padding-left: 6px;
  border: 1px solid #333;
  border-radius: 3px;
  background: #151515;
  color: #b5b5b5;
}

.help-search input {
  flex: 1;
  min-width: 0;
  outline: 0;
}

input::placeholder {
  color: inherit;
  opacity: 1;
}

.workspace {
  display: flex;
  flex: 1;
  gap: 4px;
  min-height: 0;
  padding: 0 1px;
}

.left {
  display: flex;
  flex: none;
  flex-direction: column;
  gap: 4px;
  width: 227px;
}

.panel {
  background: #222;
}

.tabs {
  display: flex;
  height: 26px;
  padding-left: 11px;
}

.tab {
  align-items: center;
  gap: 10px;
  padding-top: 6px;
  border-bottom: 2px solid transparent;
}

.tab.active {
  border-bottom-color: #c4c4c4;
  color: #c4c4c4;
}

.box {
  margin: 0 6px 0 5px;
  border: 1px solid #2e2e2e;
  border-radius: 2px;
  background: #1d1d1d;
}

.favorites,
.mixer {
  margin-left: 23px;
}

.video {
  margin-left: 22px;
}

.file-tools {
  display: flex;
  align-items: center;
  gap: 11px;
  height: 32px;
  padding-left: 10px;
  color: #b5b5b5;
}

.file-tools .insert {
  margin-left: 28px;
  color: #4a4a4a;
}

.file-head {
  display: flex;
  justify-content: space-between;
  height: 18px;
  padding: 1px 6px 0 10px;
}

.file-head .state {
  width: 34px;
  padding-left: 4px;
  border-left: 1px solid #2c2c2c;
}

.file-list {
  display: flex;
  flex-direction: column;
  justify-content: space-between;
  height: 149px;
}

.file-row {
  display: flex;
  align-items: center;
  height: 19px;
  padding-left: 7px;
  border-bottom: 1px solid #282828;
  color: #b5b5b5;
}

.wave-icon {
  margin: 0 8px 0 18px;
}

.file-row span {
  color: #2d8ceb;
}

.h-thumb {
  width: 35px;
  height: 10px;
  border-radius: 5px;
  background: #333;
}

.preview {
  display: flex;
  align-items: center;
  gap: 13px;
  height: 33px;
  padding-left: 78px;
}

.preview button {
  color: #b5b5b5;
}

.preview .off {
  margin-right: 6px;
  color: #4a4a4a;
}

.effects .tabs {
  padding-left: 1px;
}

.effects .tab.active {
  margin-left: 39px;
}

.effects .marker {
  margin-left: 22px;
  border-right: 1px solid #303030;
}

.effects .more {
  margin-left: 25px;
}

.browser {
  justify-content: flex-end;
  width: 50px;
}

.preset {
  display: flex;
  align-items: center;
  height: 20px;
  margin-top: 5px;
  padding-left: 5px;
}

.select-wrap {
  display: flex;
  align-items: center;
  width: 86px;
  height: 19px;
  margin: 0 6px 0 4px;
  padding: 0 5px 0 6px;
  border: 1px solid #303030;
  border-radius: 3px;
  background: #1a1a1a;
  color: #b5b5b5;
}

.select-wrap select {
  flex: 1;
  min-width: 0;
}

.preset button {
  margin-right: 8px;
  color: #b5b5b5;
}

.preset .star {
  height: 18px;
  margin-left: 2px;
  padding-left: 8px;
  border-left: 1px solid #303030;
  color: #505050;
}

.rack-file {
  height: 18px;
  margin: 4px 6px 5px 5px;
  padding-top: 1px;
}

.rack {
  display: flex;
  height: 192px;
}

.rack ol {
  flex: 1;
}

.rack li {
  display: flex;
  align-items: center;
  height: 19px;
  border-bottom: 1px solid #2a2a2a;
}

.slot-no {
  width: 20px;
  text-align: center;
  font-size: 11px;
}

.power {
  width: 17px;
  height: 17px;
  border: 1px solid #303030;
  border-radius: 2px;
  color: #a0a0a0;
}

.slot-more {
  width: 22px;
  height: 19px;
  margin-left: auto;
  padding-right: 4px;
  border-left: 1px solid #2a2a2a;
  color: #b5b5b5;
}

.v-thumb {
  width: 10px;
  height: 122px;
  margin: 1px;
  border-radius: 5px;
  background: #303030;
}

.io {
  margin-top: 5px;
  padding: 0 12px 0 10px;
  color: #484848;
}

.io-row {
  display: flex;
  align-items: center;
  height: 23px;
}

.io-row svg {
  margin-left: 3px;
}

.gain {
  margin-left: 5px;
  font-size: 11px;
}

.mini-meter {
  width: 85px;
  height: 17px;
  margin-left: auto;
  border: 1px solid #000;
  background: linear-gradient(#000, #000) right 8px top 0 / 1px 100% no-repeat, linear-gradient(#000, #000) right 0 top 7px / 8px 1px no-repeat;
}

.mini-meter i {
  display: block;
  width: 1px;
  height: 15px;
  margin-left: 1px;
  background: #d8d83c;
}

.mini-scale {
  display: block;
  margin-left: auto;
  font-family: 'Open Sans', sans-serif;
  font-size: 8px;
  font-weight: 700;
  fill: #8f8f8f;
}

.mix {
  display: flex;
  align-items: center;
  height: 23px;
}

.mix .dry {
  margin-left: 11px;
}

.mix .wet {
  margin: 0 11px 0 5px;
}

.mix input {
  appearance: none;
  width: 56px;
  height: 10px;
  margin-left: 12px;
  background: linear-gradient(#484848, #484848) 0 center / 46px 2px no-repeat;
}

.mix input::-webkit-slider-thumb {
  appearance: none;
  width: 10px;
  height: 10px;
  border: 2px solid #555;
  border-radius: 50%;
  background: #222;
}

.rack-foot {
  display: flex;
  align-items: center;
  margin: 3px 0 0 5px;
  padding-top: 4px;
  border-top: 1px solid #333;
  color: #a0a0a0;
}

.square {
  width: 20px;
  height: 19px;
  border: 1px solid #303030;
  border-radius: 3px;
}

.list-on {
  margin: 0 2px;
  background: #131313;
  color: #2d8ceb;
}

.apply {
  width: 60px;
  height: 18px;
  margin-right: 4px;
  border-radius: 9px;
  background: #272727;
  color: #484848;
}

.rack-foot select {
  flex: 1;
  height: 19px;
  margin-left: 4px;
  padding-left: 6px;
  border: 1px solid #303030;
  border-right: 0;
  border-radius: 3px 0 0 3px;
  background: #1a1a1a;
  color: #c4c4c4;
}

.effects {
  height: 394px;
}

.history {
  display: flex;
  flex: 1;
  flex-direction: column;
}

.steps {
  flex: 1;
  margin-top: 6px;
}

.steps li {
  display: flex;
  align-items: center;
  height: 19px;
  border-bottom: 1px solid #282828;
}

.steps .current {
  background: #444;
}

.step-text {
  padding-top: 2px;
}

.pointer {
  width: 21px;
  padding-left: 2px;
  color: #c4c4c4;
}

.pointer svg,
.step-icon svg {
  display: block;
}

.step-icon {
  width: 21px;
  color: #b5b5b5;
}

.history-foot {
  display: flex;
  align-items: center;
  justify-content: space-between;
  height: 31px;
  padding: 0 11px 0 5px;
}

.history-foot button {
  color: #b5b5b5;
}

.main {
  display: flex;
  flex: 1;
  flex-direction: column;
  gap: 4px;
  min-width: 0;
}

.main-top,
.main-bottom {
  display: flex;
  gap: 4px;
}

.main-top {
  flex: 1;
  min-height: 0;
}

.editor {
  display: flex;
  flex: 1;
  flex-direction: column;
  min-width: 0;
}

.overview-row {
  display: flex;
  margin: 9px 0 0 6px;
}

.overview {
  display: flex;
  flex: 1;
  height: 30px;
  border: 2px solid #666;
  border-width: 2px 0;
  border-radius: 4px;
  background: #3d5549;
  overflow: hidden;
}

.overview svg {
  flex: 1;
  width: 0;
  height: 26px;
}

.handle {
  width: 5px;
  border: 1px solid #777;
  border-width: 0 1px;
  background: #4a4a4a;
}

.overview-tools {
  display: flex;
  align-items: center;
  gap: 12px;
  width: 80px;
  padding-left: 11px;
}

.overview-tools button:last-child {
  color: #b5b5b5;
}

.ruler-row {
  display: flex;
  margin: 17px 0 0 8px;
}

.ruler {
  flex: 1;
  width: 0;
  height: 25px;
  border: 1px solid #000;
  border-right: 0;
  background: #274338;
  fill: #8b9c94;
  font-family: 'Open Sans', sans-serif;
  font-size: 10px;
  font-weight: 600;
}

.ruler-row svg.ruler {
  overflow: visible;
}

.snap {
  display: flex;
  width: 82px;
  padding-left: 7px;
}

.snap button {
  width: 21px;
  height: 21px;
  border: 1px solid #303030;
  background: #131313;
  color: #2d8ceb;
}

.wave-row {
  display: flex;
  flex: 1;
  min-height: 0;
  margin: 0 8px;
}

.wave-area {
  position: relative;
  flex: 1;
  min-width: 0;
  background: #274338;
}

.wave {
  display: block;
  width: 100%;
  height: 100%;
}

.fade {
  position: absolute;
  top: 2px;
  left: 12px;
  line-height: 0;
}

.fade-out {
  right: 13px;
  left: auto;
}

.hud {
  position: absolute;
  top: 102px;
  left: 44.7%;
  display: flex;
  align-items: center;
  width: 124px;
  height: 26px;
  background: #222;
  color: #9a9a9a;
}

.hud-grip {
  align-self: stretch;
  width: 8px;
  margin-right: 2px;
  background: repeating-linear-gradient(#999 0 1px, #4a4d4a 1px 2px) center / 3px 10px no-repeat, #4a4d4a;
}

.hud svg + svg {
  margin-left: 4px;
}

.hud-gain {
  margin-left: 5px;
  font-family: 'Open Sans', sans-serif;
  font-size: 11px;
  font-weight: 600;
}

.hud-gain b {
  color: #2d8ceb;
  font-weight: 600;
}

.hud button {
  width: 18px;
  height: 18px;
  margin-left: auto;
  border-left: 1px solid #555;
  color: #c4c4c4;
}

.scales {
  display: flex;
  flex-direction: column;
  width: 74px;
  border: 1px solid #000;
  border-width: 1px 1px 0;
}

.scale {
  display: flex;
  flex: 1;
  align-items: center;
}

.scale + .scale {
  border-top: 1px solid #000;
}

.scale svg {
  width: 49px;
  height: 100%;
  overflow: visible;
  font-family: 'Open Sans', sans-serif;
  font-size: 10px;
  font-weight: 600;
  fill: #8f8f8f;
}

.scale button {
  width: 21px;
  height: 17px;
  border: 1px solid #303030;
  border-radius: 3px;
  background: #131313;
  color: #2d8ceb;
  font-size: 9px;
  font-weight: 700;
}

.strip {
  display: flex;
  align-items: center;
  justify-content: space-between;
  height: 11px;
  margin: 0 8px;
  padding: 0 18px 0 610px;
  border: 1px solid #000;
  background: #2e2e2e;
}

.strip-grip {
  width: 23px;
  height: 3px;
  background: repeating-linear-gradient(90deg, #777 0 1px, #2e2e2e 1px 2px);
}

.transport {
  display: grid;
  grid-template-columns: 392px auto 1fr;
  align-items: center;
  height: 37px;
  padding: 0 11px 1px 0;
}

.time {
  padding-left: 11px;
  color: #2d8ceb;
  font-family: 'Open Sans', sans-serif;
  font-size: 16px;
}

.buttons {
  display: flex;
  color: #b5b5b5;
}

.zooms {
  justify-content: flex-end;
}

.buttons button {
  width: 30px;
  height: 22px;
}

.buttons .off {
  color: #4a4a4a;
}

.buttons .rec {
  color: #f13c3c;
}

.sound {
  width: 421px;
}

h2 {
  display: flex;
  align-items: center;
  gap: 10px;
  color: #b5b5b5;
}

.sound h2 {
  height: 31px;
  padding: 1px 0 0 12px;
  border-bottom: 2px solid #2e2e2e;
}

.none {
  height: 30px;
  padding: 7px 0 0 12px;
  border-bottom: 2px solid #2e2e2e;
  font-style: italic;
}

.sound-preset {
  display: flex;
  align-items: center;
  height: 35px;
  padding: 0 10px 0 11px;
  border-bottom: 2px solid #2e2e2e;
  color: #484848;
}

.sound-preset .select-wrap {
  flex: 1;
  margin: 0 0 0 5px;
  border-color: #282828;
  background: #282828;
  color: #555;
}

.blank {
  height: 31px;
  border-bottom: 2px solid #2e2e2e;
}

.levels {
  flex: 1;
  min-width: 0;
}

.levels h2 {
  height: 33px;
  padding: 0 0 2px 12px;
}

.meter {
  display: flex;
  justify-content: space-between;
  height: 39px;
  margin: 0 6px;
  border: 1px solid #000;
  background: #1b1b1b;
}

.floor {
  width: 1px;
  background: #d8d83c;
}

.clip {
  width: 9px;
  border-left: 1px solid #000;
  background: linear-gradient(#f14848 18px, #000 18px, #000 19px, #1b1b1b 19px);
}

.meter-scale {
  display: block;
  width: calc(100% - 25px);
  height: 20px;
  margin-left: 8px;
  overflow: visible;
  fill: #8f8f8f;
  font-family: 'Open Sans', sans-serif;
  font-size: 9px;
}

.selection {
  width: 239px;
}

.selection h2 {
  height: 29px;
  padding: 1px 0 0 12px;
}

table {
  width: 228px;
  margin-left: 11px;
  border-collapse: collapse;
  table-layout: fixed;
}

thead tr {
  height: 18px;
}

tbody tr {
  height: 20px;
}

th,
td {
  width: 67px;
  padding: 0;
  text-align: left;
  font-weight: 400;
}

th:first-child {
  width: 29px;
}

td {
  color: #2d8ceb;
  font-family: 'Open Sans', sans-serif;
  font-size: 10px;
  font-weight: 600;
}

.status {
  display: flex;
  align-items: center;
  flex: none;
  height: 20px;
  margin: 2px 1px 0;
  padding-left: 7px;
  background: #222;
}

.message {
  margin-right: auto;
  padding-top: 1px;
}

.cell {
  height: 18px;
  padding: 1px 0 0 9px;
  border-left: 1px solid #2c2c2c;
}

.cell.empty {
  width: 50px;
}

.cell.gap {
  width: 112px;
}

.format {
  width: 194px;
  font-size: 11px;
}

.size {
  width: 55px;
  font-size: 10px;
}

.length {
  width: 62px;
  padding-left: 16px;
  font-size: 10px;
}

.disk {
  width: 78px;
  padding-left: 8px;
  font-size: 11px;
}

.cell.last {
  width: 107px;
}

.taskbar {
  display: flex;
  flex: none;
  height: 40px;
  background: #ebebeb;
  color: #222;
}

.start {
  width: 48px;
}

.win-search {
  display: flex;
  align-items: center;
  gap: 12px;
  width: 344px;
  padding-left: 12px;
  border: 1px solid #c8c8c8;
  background: #fff;
  font-size: 16px;
}

.win-search input {
  flex: 1;
  outline: 0;
}

.task {
  position: relative;
  width: 49px;
}

.running {
  background: linear-gradient(#0078d7, #0078d7) center bottom / 40px 2px no-repeat;
}

.chrome {
  background: linear-gradient(90deg, #0078d7 32px, #5fa9e6 32px) center bottom / 40px 2px no-repeat;
}

.audition {
  background: linear-gradient(#0078d7, #0078d7) center bottom / 100% 2px no-repeat, #f7f7f7;
}

.badge {
  position: absolute;
  right: 4px;
  bottom: 4px;
  width: 16px;
  height: 16px;
  border: 1px solid #777;
  border-radius: 50%;
  background: #dcdcdc;
  font-size: 12px;
  line-height: 14px;
  color: #111;
}

.tray {
  display: flex;
  margin-left: auto;
  margin-right: 4px;
  padding-right: 3px;
  border-right: 1px solid #bbb;
}

.tray button {
  width: 24px;
}

.ime {
  align-self: center;
  width: 22px;
  text-align: center;
  font-size: 18px;
}

.hangul {
  display: flex;
  align-items: center;
  justify-content: center;
  width: 33px;
}

.hangul b {
  width: 16px;
  height: 16px;
  border: 1px solid #222;
  font-size: 12px;
  font-weight: 400;
  line-height: 14px;
  text-align: center;
}

.clock {
  display: flex;
  flex-direction: column;
  align-items: center;
  justify-content: center;
  gap: 2px;
  width: 84px;
}

.tray .notice {
  position: relative;
  width: 44px;
}

.tray .notice .badge {
  right: 7px;
}
</style>
